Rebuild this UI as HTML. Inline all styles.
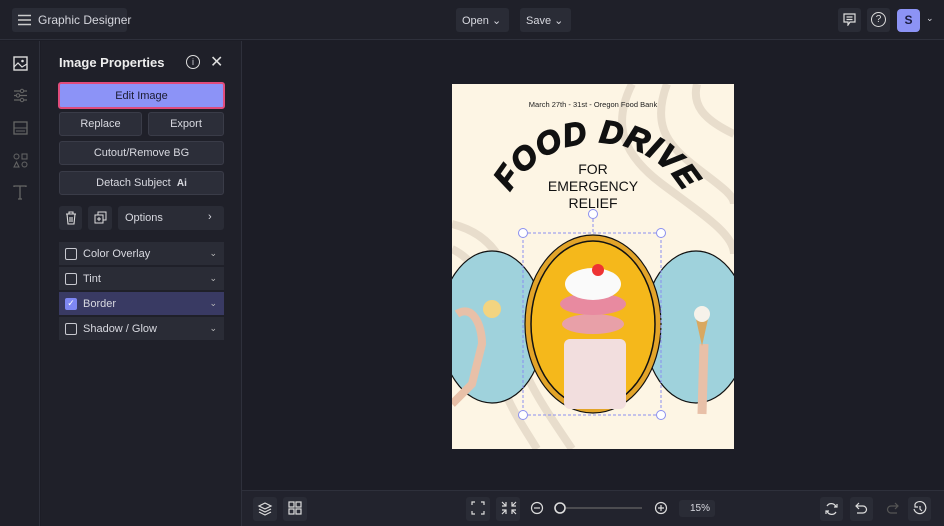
<!DOCTYPE html>
<html><head><style>
*{box-sizing:border-box;margin:0;padding:0}
body{width:944px;height:526px;background:#1c1d26;font-family:"Liberation Sans",sans-serif;color:#d8d9e0;position:relative;overflow:hidden}
.a{position:absolute}
.btn{position:absolute;background:#2c2e39;border:1px solid #3a3c48;border-radius:3px;font-size:11px;color:#d8d9e0;display:flex;align-items:center;justify-content:center}
.tb{position:absolute;background:#2a2c36;border-radius:3px}
.row{position:absolute;left:59px;width:165px;height:23px;background:#2a2c36;font-size:11px;display:flex;align-items:center;padding-left:6px}
.cb{width:12px;height:12px;border:1.5px solid #c8c9d0;border-radius:2px;margin-right:6px}
.chev{position:absolute;right:7px;top:6px;font-size:9px;color:#bbb}
</style></head><body>
<div class="a" style="left:0;top:0;width:944px;height:40px;background:#1f2029;border-bottom:1px solid #2e303b"></div>
<div class="tb" style="left:12px;top:8px;width:115px;height:24px"></div>
<svg class="a" style="left:18px;top:14px" width="13" height="12"><path d="M0 1.5H13M0 6H13M0 10.5H13" stroke="#ccc" stroke-width="1.4"/></svg>
<div class="a" style="left:38px;top:13px;font-size:12px;color:#d5d6dd">Graphic Designer</div>
<div class="tb" style="left:456px;top:8px;width:53px;height:24px"></div>
<div class="a" style="left:462px;top:14px;font-size:11px">Open ⌄</div>
<div class="tb" style="left:520px;top:8px;width:51px;height:24px"></div>
<div class="a" style="left:526px;top:14px;font-size:11px">Save ⌄</div>
<div class="tb" style="left:838px;top:8px;width:23px;height:24px"></div>
<svg class="a" style="left:843px;top:13px" width="13" height="13"><path d="M1 1H12V9H7L5 12V9H1Z M3.5 4H9.5M3.5 6.5H9.5" fill="none" stroke="#ddd" stroke-width="1.2"/></svg>
<div class="tb" style="left:867px;top:8px;width:23px;height:24px"></div>
<div class="a" style="left:871px;top:12px;width:15px;height:15px;border:1.4px solid #ddd;border-radius:50%;font-size:10px;text-align:center;line-height:13px;color:#ddd">?</div>
<div class="a" style="left:897px;top:9px;width:23px;height:23px;background:#8c93f5;border-radius:4px;color:#1c1d40;font-weight:bold;font-size:12px;text-align:center;line-height:23px">S</div>
<div class="a" style="left:926px;top:13px;font-size:9px">⌄</div>
<div class="a" style="left:0;top:41px;width:40px;height:485px;background:#1f2029;border-right:1px solid #2e303b"></div>
<svg class="a" style="left:13px;top:56px" width="15" height="15"><rect x="1" y="1" width="13" height="13" fill="none" stroke="#ddd" stroke-width="1.4"/><path d="M1 11L5 7L9 11L14 8" fill="none" stroke="#ddd" stroke-width="1.2"/><circle cx="9.5" cy="5" r="1.3" fill="#ddd"/></svg>
<svg class="a" style="left:13px;top:88px" width="15" height="15"><path d="M1 3H14M1 7.5H14M1 12H14" stroke="#666" stroke-width="1.2"/><circle cx="9" cy="3" r="1.7" fill="#1f2029" stroke="#666"/><circle cx="5" cy="7.5" r="1.7" fill="#1f2029" stroke="#666"/><circle cx="9" cy="12" r="1.7" fill="#1f2029" stroke="#666"/></svg>
<svg class="a" style="left:13px;top:121px" width="15" height="14"><rect x="1" y="1" width="13" height="12" fill="none" stroke="#666" stroke-width="1.3"/><path d="M1 7H14M3 10H12" stroke="#666"/></svg>
<svg class="a" style="left:13px;top:153px" width="15" height="15"><circle cx="3.5" cy="3.5" r="2.5" fill="none" stroke="#666"/><rect x="9" y="1" width="5" height="5" fill="none" stroke="#666"/><path d="M3.5 9L6 14H1Z" fill="none" stroke="#666"/><circle cx="11.5" cy="11.5" r="2.5" fill="none" stroke="#666"/></svg>
<svg class="a" style="left:13px;top:185px" width="14" height="15"><path d="M1 2V1H13V2M7 1V14M5 14H9" fill="none" stroke="#666" stroke-width="1.3"/></svg>
<div class="a" style="left:41px;top:41px;width:201px;height:485px;background:#1f2029;border-right:1px solid #2e303b"></div>
<div class="a" style="left:59px;top:55px;font-size:13px;font-weight:bold;color:#eee">Image Properties</div>
<div class="a" style="left:186px;top:55px;width:14px;height:14px;border:1.3px solid #ddd;border-radius:50%;font-size:9px;text-align:center;line-height:12px">i</div>
<div class="a" style="left:210px;top:52px;font-size:16px;color:#ddd">✕</div>
<div class="btn" style="left:58px;top:82px;width:167px;height:27px;background:#8c93f7;border:2px solid #e04c7c;color:#1a1b30">Edit Image</div>
<div class="btn" style="left:59px;top:112px;width:83px;height:24px">Replace</div>
<div class="btn" style="left:148px;top:112px;width:76px;height:24px">Export</div>
<div class="btn" style="left:59px;top:141px;width:165px;height:24px">Cutout/Remove BG</div>
<div class="btn" style="left:59px;top:171px;width:165px;height:24px">Detach Subject&nbsp;&nbsp;<b style="font-size:10px">Ai</b></div>
<div class="tb" style="left:59px;top:206px;width:23px;height:24px"></div>
<svg class="a" style="left:65px;top:211px" width="12" height="14"><path d="M1 3H11M4 3V1H8V3M2 3L3 13H9L10 3M5 6V11M7 6V11" fill="none" stroke="#ddd" stroke-width="1.1"/></svg>
<div class="tb" style="left:88px;top:206px;width:24px;height:24px"></div>
<svg class="a" style="left:94px;top:211px" width="13" height="13"><rect x="1" y="4" width="8" height="8" fill="none" stroke="#ddd"/><path d="M4 4V1H12V9H9M3 8H7M5 6V10" fill="none" stroke="#ddd"/></svg>
<div class="tb" style="left:118px;top:206px;width:106px;height:24px"></div>
<div class="a" style="left:125px;top:212px;font-size:11px">Options</div>
<div class="a" style="left:208px;top:211px;font-size:11px">›</div>
<div class="row" style="top:242px"><div class="cb"></div>Color Overlay<span class="chev">⌄</span></div>
<div class="row" style="top:267px"><div class="cb"></div>Tint<span class="chev">⌄</span></div>
<div class="row" style="top:292px;background:#393a63"><div class="cb" style="background:#7e87f3;border-color:#7e87f3;color:#fff;font-size:9px;line-height:9px;text-align:center">✓</div>Border<span class="chev">⌄</span></div>
<div class="row" style="top:317px"><div class="cb"></div>Shadow / Glow<span class="chev">⌄</span></div>
<div class="a" style="left:242px;top:490px;width:702px;height:36px;background:#22232d;border-top:1px solid #2e303b"></div>
<div class="tb" style="left:253px;top:497px;width:24px;height:24px"></div>
<div class="tb" style="left:283px;top:497px;width:24px;height:24px"></div>
<div class="tb" style="left:466px;top:497px;width:24px;height:24px"></div>
<div class="tb" style="left:496px;top:497px;width:24px;height:24px"></div>
<svg class="a" style="left:240px;top:490px" width="704" height="36" fill="none" stroke="#ddd" stroke-width="1.2">
<path d="M25 13L31 16L25 19L19 16Z M19 19L25 22L31 19M19 22L25 25L31 22"/>
<rect x="49" y="12" width="5" height="5"/><rect x="56" y="12" width="5" height="5"/><rect x="49" y="19" width="5" height="5"/><rect x="56" y="19" width="5" height="5"/>
<path d="M232 15V12H235M241 12H244V15M244 21V24H241M235 24H232V21"/>
<path d="M262 12L266 16M262 16H266V12M276 12L272 16M276 16H272V12M262 24L266 20M262 20H266V24M276 24L272 20M276 20H272V24"/>
<circle cx="297" cy="18" r="5.5"/><path d="M294 18H300"/>
<path d="M326 18H402" stroke="#666"/><circle cx="320" cy="18" r="5" fill="#22232d" stroke="#ddd" stroke-width="1.6"/>
<circle cx="421" cy="18" r="5.5"/><path d="M418 18H424M421 15V21"/>
</svg>
<div class="a" style="left:679px;top:500px;width:36px;height:17px;background:#2a2c36;border-radius:3px;font-size:10px;text-align:right;padding-right:5px;line-height:17px">15%</div>
<div class="tb" style="left:820px;top:497px;width:23px;height:24px"></div>
<div class="tb" style="left:850px;top:497px;width:23px;height:24px"></div>
<div class="tb" style="left:908px;top:497px;width:23px;height:24px"></div>
<svg class="a" style="left:820px;top:497px" width="120" height="24" fill="none" stroke="#ddd" stroke-width="1.2">
<path d="M7 9A5 5 0 0 1 16 10M16 15A5 5 0 0 1 7 14M14 10H17V7M9 14H6V17"/>
<path d="M36 9H43A3.5 3.5 0 0 1 43 16H37M39 6L36 9L39 12"/>
<path d="M78 9H71A3.5 3.5 0 0 0 71 16H77M75 6L78 9L75 12" stroke="#555"/>
<path d="M95 7A6 6 0 1 1 94 12M95 7V10H98M100 9V12L102 14"/>
</svg>
<svg class="a" style="left:452px;top:84px" width="282" height="365">
<defs><clipPath id="p"><rect width="282" height="365"/></clipPath></defs>
<g clip-path="url(#p)">
<rect width="282" height="365" fill="#fdf5e4"/>
<g fill="none" stroke="#e8ddcc" stroke-width="8">
<path d="M180 0C160 40 170 70 210 100C250 130 282 150 282 170"/>
<path d="M215 0C200 40 215 60 240 80C265 100 282 110 282 120"/>
<path d="M0 140C40 150 60 180 60 230C60 280 90 320 120 365"/>
<path d="M0 165C30 180 40 210 40 250C40 300 70 340 85 365"/>
<path d="M245 0C240 20 250 35 282 50"/>
</g>
<text x="141" y="23" font-size="7.5" text-anchor="middle" fill="#222" font-family="Liberation Sans">March 27th - 31st - Oregon Food Bank</text>
<path id="arc" d="M50 128A98 92 0 0 1 240 128" fill="none"/>
<text font-size="32" font-weight="900" font-style="italic" fill="#111" stroke="#111" stroke-width="1.5" font-family="Liberation Sans" letter-spacing="1"><textPath href="#arc" startOffset="50%" text-anchor="middle">FOOD DRIVE</textPath></text>
<g font-family="Liberation Sans" font-size="14" fill="#111" text-anchor="middle"><text x="141" y="90">FOR</text><text x="141" y="107">EMERGENCY</text><text x="141" y="124">RELIEF</text></g>
<ellipse cx="40" cy="243" rx="52" ry="76" fill="#9fd2dc" stroke="#111" stroke-width="1.2"/>
<ellipse cx="244" cy="243" rx="52" ry="76" fill="#9fd2dc" stroke="#111" stroke-width="1.2"/>
<ellipse cx="141" cy="240" rx="68" ry="89" fill="#e2a429" stroke="#111" stroke-width="1.2"/>
<ellipse cx="141" cy="240" rx="62" ry="83" fill="#f5b81b" stroke="#111" stroke-width="1.5"/>
<rect x="112" y="255" width="62" height="70" rx="6" fill="#f2dede"/>
<ellipse cx="141" cy="240" rx="31" ry="10" fill="#e8a0a8"/>
<ellipse cx="141" cy="220" rx="33" ry="11" fill="#e88aa0"/>
<ellipse cx="141" cy="200" rx="28" ry="16" fill="#fafafa"/>
<circle cx="146" cy="186" r="6" fill="#e33"/>
<path d="M5 230C20 220 30 240 30 260L20 300L0 320" stroke="#e8c0a8" stroke-width="8" fill="none"/>
<circle cx="40" cy="225" r="9" fill="#f3d480"/>
<path d="M250 330L252 260" stroke="#e8c0a8" stroke-width="9"/>
<path d="M244 235L256 235L250 262Z" fill="#d9a860"/><circle cx="250" cy="230" r="8" fill="#f6f2ea"/>
</g>
<g fill="none" stroke="#8a8ff0" stroke-width="1" stroke-dasharray="3 2"><rect x="71" y="149" width="138" height="182"/><path d="M141 130V149"/></g>
<g fill="#fff" stroke="#8a8ff0"><circle cx="71" cy="149" r="4.5"/><circle cx="209" cy="149" r="4.5"/><circle cx="71" cy="331" r="4.5"/><circle cx="209" cy="331" r="4.5"/><circle cx="141" cy="130" r="4.5"/></g>
</svg>
</body></html>
